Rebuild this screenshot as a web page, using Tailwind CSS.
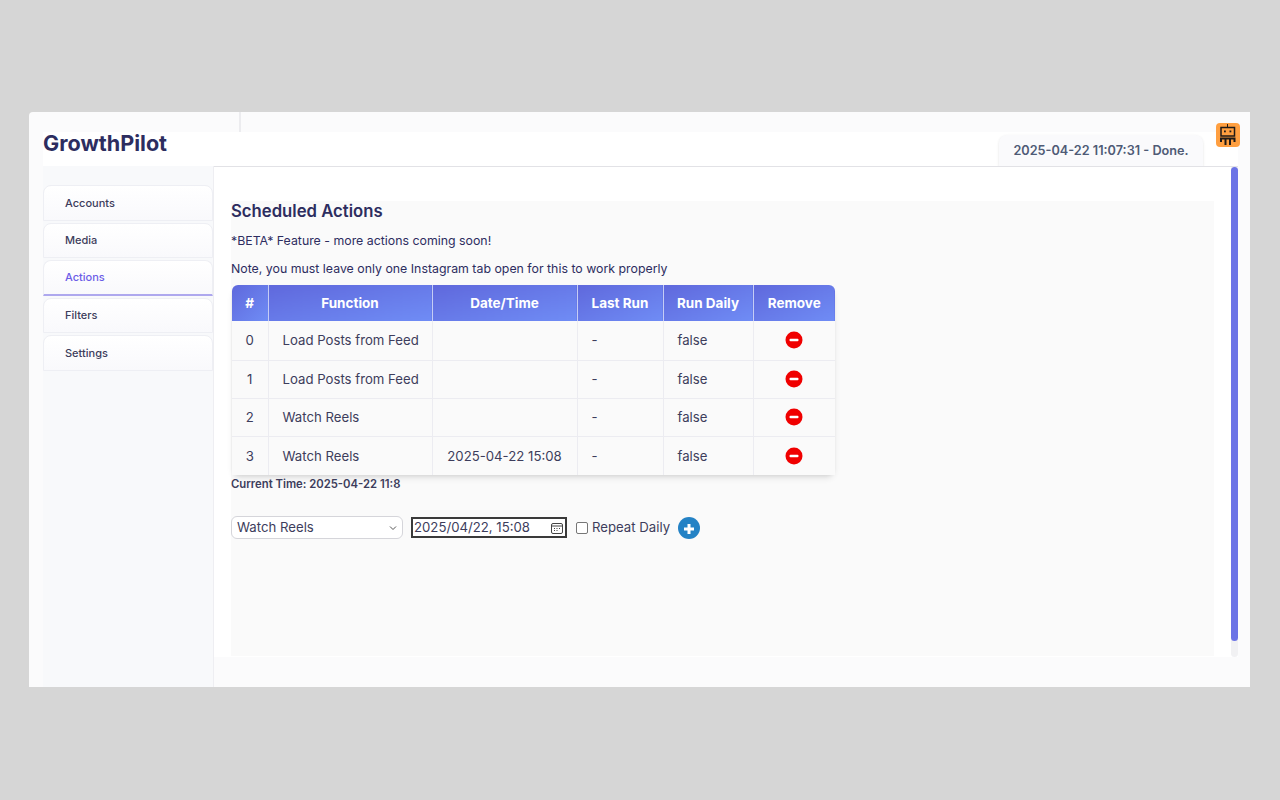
<!DOCTYPE html>
<html lang="en">

<head>
    <meta charset="UTF-8">
    <meta name="viewport" content="width=device-width, initial-scale=1.0">
    <title>GrowthPilot</title>
    <script src="https://cdn.jsdelivr.net/npm/@tailwindcss/browser@4"></script>
</head>

<body class="bg-[#d6d6d6] h-[800px] overflow-hidden pt-[112px] pl-[29px] font-['Inter',sans-serif] text-[#2d2d5f]">
    <div class="relative w-[1221px] h-[575px] bg-[#fbfbfc] rounded-tl-[4px] pl-[14px] pr-[12px] flex flex-col">
        <!-- top strip -->
        <div class="h-[20px] w-[198px] border-r-2 border-[#ececef] shrink-0"></div>

        <!-- header -->
        <div class="h-[34px] bg-white flex items-start justify-between shrink-0">
            <h1 class="text-[21.6px] leading-[22px] font-bold text-[#2d2d5f]">GrowthPilot</h1>
            <div class="w-[204px] h-[31px] mt-[3px] mr-[35px] bg-[#fafafc] rounded-t-lg shadow-sm flex items-center justify-center text-[12.7px] font-semibold text-[#4f5b76]">
                2025-04-22 11:07:31 - Done.
            </div>
        </div>

        <!-- robot icon -->
        <div class="absolute left-[1187px] top-[11px] w-[24px] h-[24px] bg-[#ff9f40] rounded-[4px]">
            <svg width="24" height="24" viewBox="0 0 24 24" fill="none" stroke="#1f1a17" stroke-width="1.5">
                <path d="M11.5 1v3" stroke-width="1" />
                <rect x="5" y="4.5" width="13.5" height="8.5" />
                <rect x="8" y="7.5" width="1.8" height="1.8" fill="#1f1a17" stroke="none" />
                <rect x="13.5" y="7.5" width="1.8" height="1.8" fill="#1f1a17" stroke="none" />
                <path d="M5 19v-3.5h13.5v3.5" stroke-width="2" />
                <path d="M9.5 15.5v6.5M14 15.5v6.5" stroke-width="2" />
            </svg>
        </div>

        <div class="flex flex-1 min-h-0">
            <!-- sidebar -->
            <nav class="w-[171px] bg-[#f8f9fb] border-r border-[#eeeef2] shrink-0 pt-[19px] flex flex-col gap-[2px] text-[11px] font-medium text-[#3d3d5c]">
                <a class="h-[35.5px] pl-[21px] flex items-center bg-gradient-to-b from-white to-[#f9f9fc] rounded-t-lg border border-[#eeeff4]">Accounts</a>
                <a class="h-[35.5px] pl-[21px] flex items-center bg-gradient-to-b from-white to-[#f9f9fc] rounded-t-lg border border-[#eeeff4]">Media</a>
                <a class="h-[35.5px] pl-[21px] flex items-center bg-gradient-to-b from-white to-[#f9f9fc] rounded-t-lg border border-[#eeeff4] border-b-2 border-b-[#aea8ee] text-[#6c5ce7]">Actions</a>
                <a class="h-[35.5px] pl-[21px] flex items-center bg-gradient-to-b from-white to-[#f9f9fc] rounded-t-lg border border-[#eeeff4]">Filters</a>
                <a class="h-[35.5px] pl-[21px] flex items-center bg-gradient-to-b from-white to-[#f9f9fc] rounded-t-lg border border-[#eeeff4]">Settings</a>
            </nav>

            <!-- main -->
            <main class="flex-1 border-t border-[#e2e2e6] flex flex-col">
                <div class="h-[490px] bg-white pl-[17px] pr-[24px] pt-[34px] relative">
                    <div class="h-[455px] bg-[#fafafa]">
                        <h2 class="text-[16.7px] leading-[20px] font-semibold">Scheduled Actions</h2>
                        <p class="mt-[10px] leading-[20px] text-[12.35px]">*BETA* Feature - more actions coming soon!</p>
                        <p class="mt-[8px] leading-[20px] text-[12.35px]">Note, you must leave only one Instagram tab open for this to work properly</p>

                        <table class="mt-[6px] ml-[1px] w-[603px] table-fixed border-collapse rounded-lg shadow-md text-[13.2px] text-[#3d3d5c]">
                            <thead class="text-white text-[13.5px] font-semibold">
                                <tr class="h-[36px]">
                                    <th class="w-[36px] bg-gradient-to-br from-[#5f68dc] to-[#6f8cf5] rounded-tl-md border-r border-[#c5cdf5]">#</th>
                                    <th class="w-[164px] bg-gradient-to-br from-[#5f68dc] to-[#6f8cf5] border-r border-[#c5cdf5]">Function</th>
                                    <th class="w-[145px] bg-gradient-to-br from-[#5f68dc] to-[#6f8cf5] border-r border-[#c5cdf5]">Date/Time</th>
                                    <th class="w-[86px] bg-gradient-to-br from-[#5f68dc] to-[#6f8cf5] border-r border-[#c5cdf5]">Last Run</th>
                                    <th class="w-[90px] bg-gradient-to-br from-[#5f68dc] to-[#6f8cf5] border-r border-[#c5cdf5]">Run Daily</th>
                                    <th class="w-[82px] bg-gradient-to-br from-[#5f68dc] to-[#6f8cf5] rounded-tr-md">Remove</th>
                                </tr>
                            </thead>
                            <tbody class="bg-[#fafafa] [&_td:not(:last-child)]:pt-[2px]">
                                <tr class="h-[39px] border-b border-[#ececf1]">
                                    <td class="text-center border-r border-[#ececf1]">0</td>
                                    <td class="pl-[14px] border-r border-[#ececf1]">Load Posts from Feed</td>
                                    <td class="text-center border-r border-[#ececf1]"></td>
                                    <td class="pl-[14px] border-r border-[#ececf1]">-</td>
                                    <td class="pl-[14px] border-r border-[#ececf1]">false</td>
                                    <td>
                                        <svg class="mx-auto" width="18" height="18" viewBox="0 0 18 18"><circle cx="9" cy="9" r="8.5" fill="#f00000" /><rect x="4.5" y="7.8" width="9" height="2.4" rx="1" fill="#fff" /></svg>
                                    </td>
                                </tr>
                                <tr class="h-[38px] border-b border-[#ececf1]">
                                    <td class="text-center border-r border-[#ececf1]">1</td>
                                    <td class="pl-[14px] border-r border-[#ececf1]">Load Posts from Feed</td>
                                    <td class="text-center border-r border-[#ececf1]"></td>
                                    <td class="pl-[14px] border-r border-[#ececf1]">-</td>
                                    <td class="pl-[14px] border-r border-[#ececf1]">false</td>
                                    <td>
                                        <svg class="mx-auto" width="18" height="18" viewBox="0 0 18 18"><circle cx="9" cy="9" r="8.5" fill="#f00000" /><rect x="4.5" y="7.8" width="9" height="2.4" rx="1" fill="#fff" /></svg>
                                    </td>
                                </tr>
                                <tr class="h-[38px] border-b border-[#ececf1]">
                                    <td class="text-center border-r border-[#ececf1]">2</td>
                                    <td class="pl-[14px] border-r border-[#ececf1]">Watch Reels</td>
                                    <td class="text-center border-r border-[#ececf1]"></td>
                                    <td class="pl-[14px] border-r border-[#ececf1]">-</td>
                                    <td class="pl-[14px] border-r border-[#ececf1]">false</td>
                                    <td>
                                        <svg class="mx-auto" width="18" height="18" viewBox="0 0 18 18"><circle cx="9" cy="9" r="8.5" fill="#f00000" /><rect x="4.5" y="7.8" width="9" height="2.4" rx="1" fill="#fff" /></svg>
                                    </td>
                                </tr>
                                <tr class="h-[39px]">
                                    <td class="text-center border-r border-[#ececf1]">3</td>
                                    <td class="pl-[14px] border-r border-[#ececf1]">Watch Reels</td>
                                    <td class="text-center border-r border-[#ececf1]">2025-04-22 15:08</td>
                                    <td class="pl-[14px] border-r border-[#ececf1]">-</td>
                                    <td class="pl-[14px] border-r border-[#ececf1]">false</td>
                                    <td>
                                        <svg class="mx-auto" width="18" height="18" viewBox="0 0 18 18"><circle cx="9" cy="9" r="8.5" fill="#f00000" /><rect x="4.5" y="7.8" width="9" height="2.4" rx="1" fill="#fff" /></svg>
                                    </td>
                                </tr>
                            </tbody>
                        </table>

                        <p class="mt-[1px] text-[11.3px] leading-[16px] font-semibold text-[#3d3d5c]">Current Time: 2025-04-22 11:8</p>

                        <div class="mt-[24px] flex items-center text-[13.2px] text-[#3d3d5c]">
                            <div class="w-[172px] h-[23px] bg-white border border-[#d5d5da] rounded-md pl-[5px] pr-[5px] flex items-center justify-between">
                                <span class="pt-[1px]">Watch Reels</span>
                                <svg width="8" height="6" viewBox="0 0 8 6" fill="none" stroke="#555" stroke-width="1"><path d="M1 1.5l3 3 3-3" /></svg>
                            </div>
                            <div class="ml-[8px] w-[156px] h-[21px] bg-white border-2 border-[#3a3a3a] pl-[1px] pr-[2px] flex items-center justify-between">
                                <span class="pt-[1px]">2025/04/22, 15:08</span>
                                <svg width="12" height="12" viewBox="0 0 12 12" fill="none" stroke="#444" stroke-width="1"><rect x="0.5" y="1.5" width="11" height="10" rx="1.5" /><path d="M0.5 4h11M3 6.5h1M5.5 6.5h1M8 6.5h1M3 8.5h1M5.5 8.5h1" /></svg>
                            </div>
                            <span class="ml-[9px] w-[12px] h-[12px] bg-white border border-[#767676] rounded-[2px]"></span>
                            <span class="ml-[4px] pt-[1px]">Repeat Daily</span>
                            <svg class="ml-[8px]" width="22" height="22" viewBox="0 0 22 22"><circle cx="11" cy="11" r="11" fill="#2482c5" /><path d="M11 7v10M6 12h10" stroke="#fff" stroke-width="3" /></svg>
                        </div>
                    </div>

                    <!-- scrollbar -->
                    <div class="absolute right-0 top-0 w-[7px] h-[490px] bg-[#f1f1f3] rounded-b">
                        <div class="w-[7px] h-[474px] bg-[#6b73e6] rounded-full"></div>
                    </div>
                </div>
            </main>
        </div>
    </div>
</body>

</html>
